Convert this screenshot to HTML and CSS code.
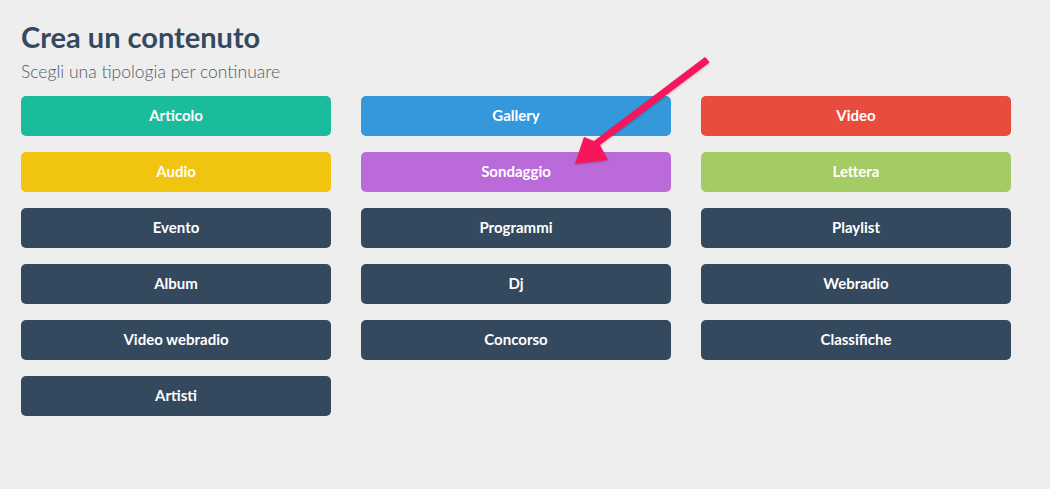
FILE: index.html
```html
<!DOCTYPE html>
<html lang="it">
<head>
<meta charset="utf-8">
<title>Crea un contenuto</title>
<link rel="stylesheet" href="styles.css">
</head>
<body>
<div class="page">
  <h1 class="title">Crea un contenuto</h1>
  <p class="subtitle">Scegli una tipologia per continuare</p>
  <div class="grid">
    <a class="btn teal">Articolo</a>
    <a class="btn blue">Gallery</a>
    <a class="btn red">Video</a>
    <a class="btn yellow">Audio</a>
    <a class="btn purple">Sondaggio</a>
    <a class="btn green">Lettera</a>
    <a class="btn dark">Evento</a>
    <a class="btn dark">Programmi</a>
    <a class="btn dark">Playlist</a>
    <a class="btn dark">Album</a>
    <a class="btn dark">Dj</a>
    <a class="btn dark">Webradio</a>
    <a class="btn dark">Video webradio</a>
    <a class="btn dark">Concorso</a>
    <a class="btn dark">Classifiche</a>
    <a class="btn dark">Artisti</a>
  </div>
</div>
<svg class="arrow" width="1050" height="489" viewBox="0 0 1050 489">
  <defs>
    <filter id="sh" x="-20%" y="-20%" width="140%" height="140%">
      <feDropShadow dx="0" dy="1" stdDeviation="1.2" flood-color="#000" flood-opacity="0.25"/>
    </filter>
  </defs>
  <path filter="url(#sh)" fill="#f5135c" d="M707 59 L709.5 62.5 L600 145 L608 160 L575 164 L584 137 L594 141 L705 57 Z"/>
</svg>
</body>
</html>
```
FILE: styles.css
```css
html, body {
  margin: 0;
  padding: 0;
  background: #eeeeee;
}
body {
  font-family: Lato, "Open Sans", sans-serif;
  color: #34495e;
}
.page {
  padding: 19px 21px;
}
.title {
  margin: 0;
  font-size: 29px;
  font-weight: 700;
  line-height: 36px;
  color: #34495e;
}
.subtitle {
  margin: 5px 0 12px;
  font-size: 17.5px;
  font-weight: 300;
  line-height: 24px;
  color: #525b64;
}
.grid {
  display: grid;
  grid-template-columns: repeat(3, 310px);
  column-gap: 30px;
  row-gap: 16px;
}
.btn {
  display: flex;
  align-items: center;
  justify-content: center;
  height: 40px;
  padding-bottom: 2px;
  box-sizing: border-box;
  border-radius: 5px;
  color: #ffffff;
  font-size: 15px;
  font-weight: 700;
  text-decoration: none;
}
.teal { background: #1abc9c; }
.blue { background: #3498db; }
.red { background: #e74c3c; }
.yellow { background: #f1c40f; }
.purple { background: #bb6bd9; }
.green { background: #a5cb64; }
.dark { background: #34495e; }
.arrow {
  position: absolute;
  left: 0;
  top: 0;
  pointer-events: none;
}
```
